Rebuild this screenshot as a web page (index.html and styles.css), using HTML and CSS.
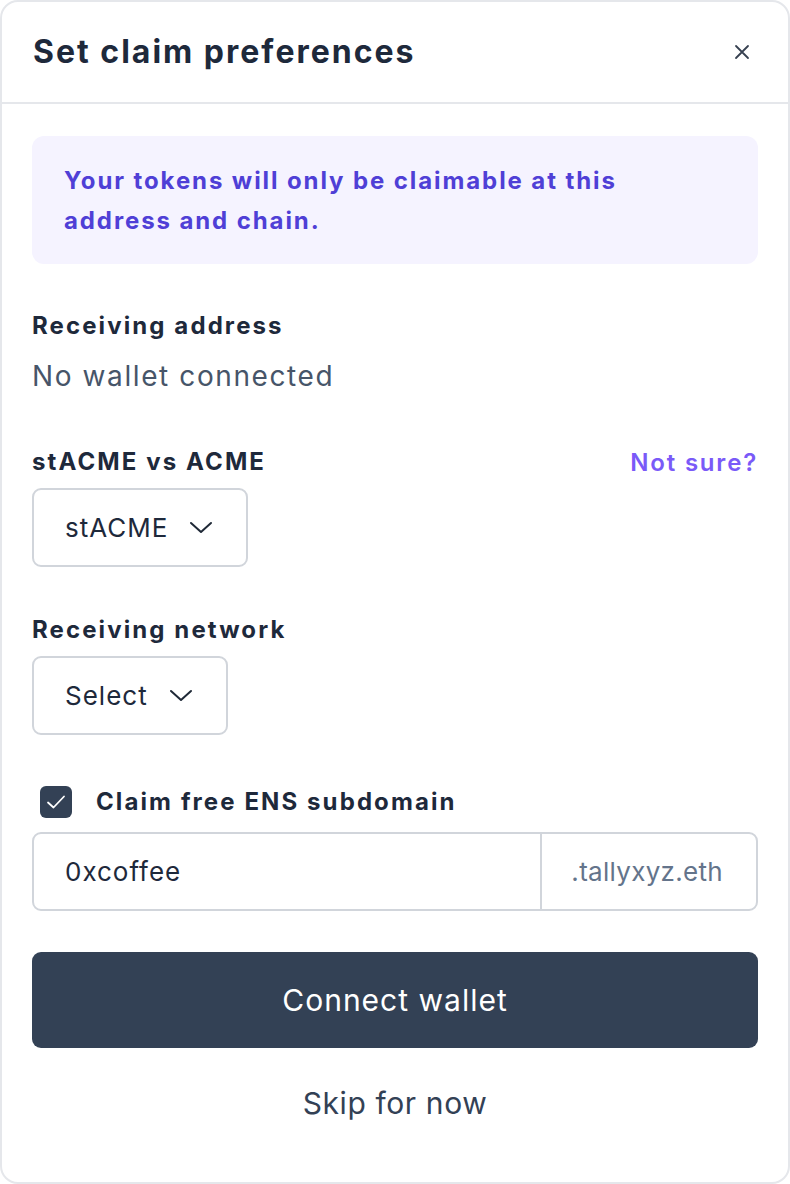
FILE: index.html
```html
<!DOCTYPE html>
<html>
<head>
<meta charset="utf-8">
<link rel="stylesheet" href="styles.css">
</head>
<body>
<div class="card">
  <header class="head">
    <h1 class="title">Set claim preferences</h1>
    <button class="close" aria-label="Close">
      <svg width="16" height="16" viewBox="0 0 16 16"><path d="M2 2L14 14M14 2L2 14" stroke="#374151" stroke-width="1.8" stroke-linecap="round"/></svg>
    </button>
  </header>
  <div class="body">
    <div class="notice">Your tokens will only be claimable at this address and chain.</div>

    <div class="field field-address">
      <div class="label">Receiving address</div>
      <div class="value">No wallet connected</div>
    </div>

    <div class="field field-token">
      <div class="label-row">
        <div class="label">stACME vs ACME</div>
        <a class="link">Not sure?</a>
      </div>
      <div class="select select-token">
        <span>stACME</span>
        <svg width="24" height="13" viewBox="0 0 24 13"><path d="M2 2L12 11L22 2" fill="none" stroke="#1f2937" stroke-width="2" stroke-linecap="round" stroke-linejoin="round"/></svg>
      </div>
    </div>

    <div class="field field-network">
      <div class="label">Receiving network</div>
      <div class="select select-network">
        <span>Select</span>
        <svg width="24" height="13" viewBox="0 0 24 13"><path d="M2 2L12 11L22 2" fill="none" stroke="#1f2937" stroke-width="2" stroke-linecap="round" stroke-linejoin="round"/></svg>
      </div>
    </div>

    <div class="field field-ens">
      <label class="check-row">
        <span class="checkbox">
          <svg width="22" height="18" viewBox="0 0 22 18"><path d="M3 9.5L8.5 14.5L19 3.5" fill="none" stroke="#ffffff" stroke-width="1.8" stroke-linecap="round" stroke-linejoin="round"/></svg>
        </span>
        <span class="label">Claim free ENS subdomain</span>
      </label>
      <div class="input-group">
        <div class="input-main">0xcoffee</div>
        <div class="input-suffix">.tallyxyz.eth</div>
      </div>
    </div>

    <button class="primary">Connect wallet</button>
    <button class="secondary">Skip for now</button>
  </div>
</div>
</body>
</html>
```
FILE: styles.css
```css
* { box-sizing: border-box; }
html, body { margin: 0; padding: 0; background: #ffffff; }
body {
  font-family: "Inter", "DejaVu Sans", sans-serif;
  color: #1e293b;
}
.card {
  width: 790px;
  height: 1184px;
  border: 2px solid #e5e7eb;
  border-radius: 18px;
  background: #ffffff;
  overflow: hidden;
}
.head {
  height: 102px;
  border-bottom: 2px solid #e5e7eb;
  display: flex;
  align-items: center;
  justify-content: space-between;
  padding: 0 38px 0 31px;
}
.title {
  margin: 0;
  font-size: 32px;
  font-weight: 700;
  color: #1e293b;
  letter-spacing: 2px;
  position: relative;
  top: -1px;
}
.close {
  border: 0;
  background: none;
  padding: 0;
  display: flex;
  cursor: pointer;
}
.body {
  padding: 32px 30px 0 30px;
  display: flex;
  flex-direction: column;
}
.notice {
  background: #f5f3ff;
  border-radius: 12px;
  padding: 25px 32px 23px 32px;
  font-size: 24px;
  line-height: 40px;
  font-weight: 700;
  color: #4f3fd6;
  letter-spacing: 1.9px;
}
.label {
  font-size: 24px;
  font-weight: 700;
  color: #1e293b;
  line-height: 32px;
  letter-spacing: 2.1px;
}
.field { display: flex; flex-direction: column; }
.field-address { margin-top: 46px; }
.field-address .value {
  margin-top: 18px;
  font-size: 28px;
  line-height: 32px;
  color: #475569;
  letter-spacing: 1.6px;
}
.field-token { margin-top: 54px; }
.label-row {
  display: flex;
  justify-content: space-between;
  align-items: center;
}
.link {
  font-size: 24px;
  font-weight: 600;
  color: #7a5af8;
  letter-spacing: 1.8px;
}
.select {
  margin-top: 10px;
  display: inline-flex;
  align-items: center;
  gap: 21px;
  height: 79px;
  border: 2px solid #d1d5db;
  border-radius: 9px;
  padding: 0 33px 0 31px;
  font-size: 26px;
  letter-spacing: 1px;
  color: #1e293b;
  align-self: flex-start;
}
.field-network { margin-top: 47px; }
.field-ens { margin-top: 51px; }
.check-row {
  display: flex;
  align-items: center;
  gap: 24px;
  padding-left: 8px;
}
.checkbox {
  width: 32px;
  height: 32px;
  border-radius: 6px;
  background: #334155;
  display: flex;
  align-items: center;
  justify-content: center;
}
.input-group {
  margin-top: 14px;
  display: flex;
  height: 79px;
  border: 2px solid #d1d5db;
  border-radius: 9px;
}
.input-main {
  flex: 1;
  display: flex;
  align-items: center;
  padding-left: 31px;
  font-size: 26px;
  letter-spacing: 1px;
  color: #1e293b;
  border-right: 2px solid #d1d5db;
}
.input-suffix {
  display: flex;
  align-items: center;
  padding: 0 33px 0 29px;
  font-size: 26px;
  letter-spacing: 0.3px;
  color: #64748b;
}
.primary {
  margin-top: 41px;
  height: 96px;
  border: 0;
  border-radius: 9px;
  background: #334155;
  color: #ffffff;
  font-family: inherit;
  font-size: 30px;
  letter-spacing: 1px;
  font-weight: 400;
}
.secondary {
  margin-top: 15px;
  height: 80px;
  border: 0;
  background: none;
  color: #334155;
  font-family: inherit;
  font-size: 30px;
  letter-spacing: 0.6px;
}
```
